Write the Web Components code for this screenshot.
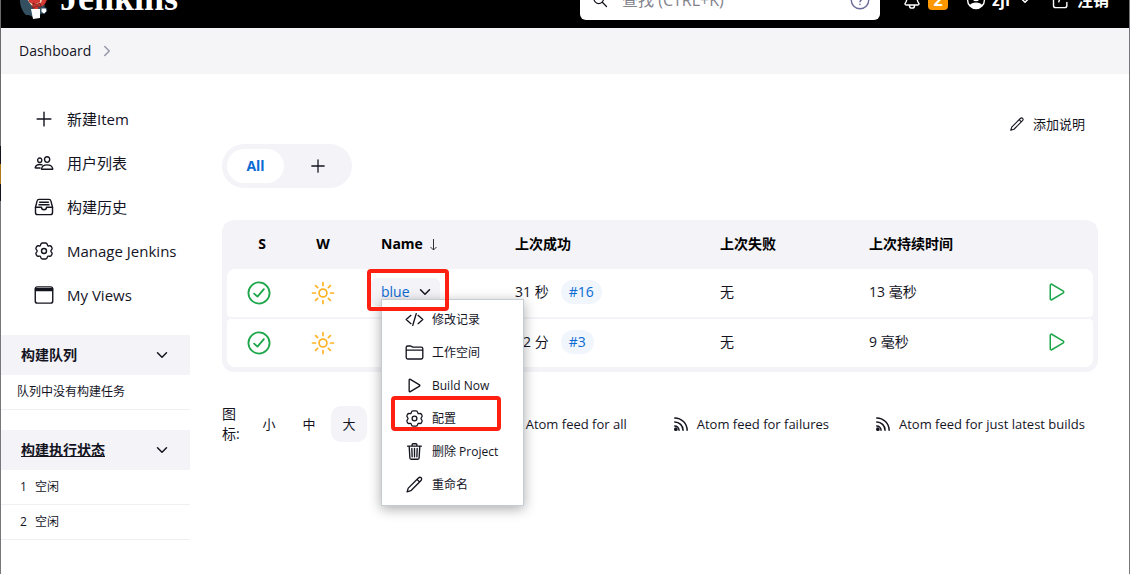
<!DOCTYPE html>
<html lang="zh-CN">
<head>
<meta charset="utf-8">
<title>Dashboard [Jenkins]</title>
<style>
html,body{margin:0;min-height:100%}
body{font-family:"Open Sans","Noto Sans CJK SC",sans-serif;font-size:14px;line-height:20px;color:#14141f;background:#fff;overflow:hidden;
--pale:#f3f3f8;--link:#0b6bd3;--green:#1ea64b}
</style>
</head>
<body>
<jk-app></jk-app>
<script>
const ICONS={
add:'<path d="M256 80v352M432 256H80"/>',
people:'<path d="M402 168c-2.93 40.67-33.1 72-66 72s-63.12-31.32-66-72c-3-42.31 26.37-72 66-72s69 30.46 66 72z"/><path d="M336 304c-65.17 0-127.84 32.37-143.54 95.41-2.08 8.34 3.15 16.59 11.72 16.59h263.65c8.57 0 13.77-8.25 11.72-16.59C463.85 335.36 401.18 304 336 304z"/><path d="M200 185.94c-2.34 32.48-26.72 58.06-53 58.06s-50.7-25.57-53-58.06C91.61 152.15 115.34 128 147 128s55.39 24.77 53 57.94z"/><path d="M206 306c-18.05-8.27-37.93-11.45-59-11.45-52 0-102.1 25.85-114.65 76.2-1.65 6.66 2.53 13.25 9.37 13.25H154"/>',
tray:'<path d="M384 60H128c-26 0-43 14-48 40L38 262v132a56 56 0 0056 56h324a56 56 0 0056-56V262l-42-162c-5-27-23-40-48-40z"/><path d="M38 262h154M320 262h154M192 262a64 64 0 00128 0M144 134h224M128 198h256"/>',
settings:'<circle cx="256" cy="256" r="64"/><path d="M438 256l14 26c22 20 30 38 16 62l-14 24c-14 24-34 28-62 18h-30l-16 27c-6 30-20 49-47 49h-86c-27 0-41-19-47-49l-16-27h-30c-28 10-48 6-62-18l-14-24c-14-24-6-42 16-62l14-26-14-26c-22-20-30-38-16-62l14-24c14-24 34-28 62-18h30l16-27c6-30 20-49 47-49h86c27 0 41 19 47 49l16 27h30c28-10 48-6 62 18l14 24c14 24 6 42-16 62z" transform="translate(13 0) scale(.95 1)"/>',
window:'<rect x="32" y="48" width="448" height="416" rx="56"/><path d="M40 92h432v48H40z" fill="currentColor"/>',
down:'<path d="M112 184l144 144 144-144"/>',
right:'<path d="M184 112l144 144-144 144"/>',
play:'<path d="M112 111v290c0 17.44 17 28.52 31 20.16l247.9-148.37c12.12-7.25 12.12-26.33 0-33.58L143 90.84c-14-8.36-31 2.72-31 20.16z"/>',
code:'<path d="M160 368L32 256l128-112M352 368l128-112-128-112M304 96l-96 320"/>',
folder:'<path d="M440 432H72a40 40 0 01-40-40V120a40 40 0 0140-40h75.89a40 40 0 0122.19 6.72l27.84 18.56a40 40 0 0022.19 6.72H440a40 40 0 0140 40v240a40 40 0 01-40 40zM32 192h448"/>',
trash:'<path d="M112 112l20 320c.95 18.49 14.4 32 32 32h184c17.67 0 30.87-13.51 32-32l20-320M70 112h372M192 112V72a23.93 23.93 0 0124-24h80a23.93 23.93 0 0124 24v40M256 176v224M184 176l8 224M328 176l-8 224"/>',
pencil:'<path d="M56 456l32-102L362 80c56-48 118 14 70 70L158 424zM324 118l70 70"/>',
check:'<circle cx="256" cy="256" r="208"/><path d="M352 180L226 328l-66-60"/>',
sun:'<path d="M256 32v64M256 416v64M414 98l-44 44M142 370l-44 44M480 256h-64M96 256H32M414 414l-44-44M142 142L98 98"/><circle cx="256" cy="256" r="84"/>',
rss:'<path d="M56 60c216 0 396 180 396 396M56 190c146 0 266 120 266 266"/><path d="M56 318c76 0 138 62 138 138"/><circle cx="92" cy="420" r="36" fill="currentColor"/>',
search:'<circle cx="216" cy="216" r="152"/><path d="M330 330l134 134"/>',
help:'<circle cx="256" cy="256" r="224"/><path d="M190 200c0-90 136-84 132 4-2 48-66 48-66 98M256 362v10"/>',
bell:'<path d="M428 336c-22-27-38-41-38-118 0-70-34-95-64-108-22-9-20-62-70-62s-48 53-70 62c-30 13-64 38-64 108 0 77-16 91-38 118-14 18-6 48 22 48h300c28 0 36-30 22-48zM320 384v16a64 64 0 01-128 0v-16"/>',
user:'<circle cx="256" cy="256" r="216"/><path d="M110 400c54-84 238-84 292 0-60 70-232 70-292 0z" fill="currentColor"/><circle cx="256" cy="200" r="72" fill="currentColor"/>',
logout:'<path d="M300 120H120a56 56 0 00-56 56v220a56 56 0 0056 56h230a56 56 0 0056-56v-76M200 300c30-120 110-140 250-140M370 80l90 80-90 80"/>'
};
const define=(name,html,setup)=>{
  const t=document.createElement('template');t.innerHTML=html;
  customElements.define(name,class extends HTMLElement{
    connectedCallback(){
      if(this.shadowRoot)return;
      const r=this.attachShadow({mode:'open'});
      const c=t.content.cloneNode(true);
      if(setup)setup(this,c);
      r.append(c);
    }
  });
};

/* line icon: name, size in px, weight = stroke width in viewBox units */
define('jk-icon','<style>:host{display:block;flex:none;width:fit-content}svg{display:block;fill:none;stroke:currentColor;stroke-linecap:round;stroke-linejoin:round}</style><svg viewBox="0 0 512 512" aria-hidden="true"></svg>',(h,r)=>{
  const s=r.querySelector('svg'),n=h.getAttribute('size')||20;
  s.setAttribute('width',n);s.setAttribute('height',n);
  s.style.strokeWidth=h.getAttribute('weight')||36;
  s.innerHTML=ICONS[h.getAttribute('name')];
});

define('jk-logo',`<style>
:host{display:block}
a{display:flex;align-items:center;gap:12px;color:#fff;text-decoration:none;font:bold 36px/40px "Liberation Serif",serif}
svg{display:block}
span{padding-bottom:4px}
</style>
<a href="#"><svg width="28" height="40" viewBox="0 0 28 40" aria-hidden="true">
<circle cx="14" cy="17" r="13" fill="#d33833"/>
<path d="M7 12c0-12 15-12 15 0v8c-2 8-12 8-15 0z" fill="#f0d6b7"/>
<path d="M8 17l12 0v5l-6 3-5-3z" fill="#d33833"/>
<path d="M0 20l7-1 4 6 3 4-1 8-4-2H6C3 32 0 27 0 20z" fill="#335061"/>
<path d="M18 27l7-2-2 8-4 2z" fill="#335061"/>
<path d="M13 23l3 2 4-2 1 4-4-1-4 2z" fill="#d33833" stroke="#81201d"/>
<path d="M11 29l9 0 0 9-7 1z" fill="#fff"/>
<path d="M21 28l5 0 1 3-3 3-3-2z" fill="#fff" stroke="#335061"/>
</svg><span>Jenkins</span></a>`);

define('jk-header',`<style>
:host{display:block;background:#000;color:#fff;overflow:hidden}
nav{display:flex;align-items:center;height:56px;margin-top:-28px;padding:0 20px 0 19px;font-size:16px;font-weight:700}
.search{display:flex;align-items:center;box-sizing:border-box;width:300px;height:40px;margin-left:auto;margin-right:22px;padding:0 10px 0 12px;gap:14px;border-radius:6px;background:#fff;color:#14141f}
input{flex:1;min-width:0;border:0;padding:0;background:none;font:400 16px/24px "Open Sans","Noto Sans CJK SC",sans-serif;outline:0}
input::placeholder{color:#83838c;opacity:1}
a,button{display:flex;align-items:center;gap:6px;color:inherit;text-decoration:none;font:inherit;background:none;border:0;padding:0}
.badge{background:#ff9800;border-radius:4px;width:20px;height:20px;line-height:20px;text-align:center}
.user{margin:0 18px}
</style>
<nav><jk-logo></jk-logo>
<label class="search"><jk-icon name="search" size="16" weight="40"></jk-icon><input type="search" placeholder="查找 (CTRL+K)" aria-label="查找"><jk-icon name="help" size="20" style="color:#6b6b99"></jk-icon></label>
<button aria-label="通知"><jk-icon name="bell" size="20"></jk-icon><span class="badge">2</span></button>
<button class="user"><jk-icon name="user" size="20"></jk-icon><span>zjf</span><jk-icon name="down" size="16" weight="50"></jk-icon></button>
<a href="#"><jk-icon name="logout" size="20"></jk-icon><span>注销</span></a>
</nav>`);

define('jk-crumbs',`<style>
:host{display:block;background:#f5f5f8}
nav{display:flex;align-items:center;gap:8px;height:46px;padding:0 18px}
a{color:inherit;text-decoration:none}
jk-icon{color:#9a9aab}
</style><nav><a href="#">Dashboard</a><jk-icon name="right" size="16" weight="52"></jk-icon></nav>`);

define('jk-task',`<style>
:host{display:block}
a{display:flex;align-items:center;gap:13px;height:44px;padding-left:33px;color:inherit;text-decoration:none;font-size:15px}
</style><a href="#"><jk-icon size="20"></jk-icon><slot></slot></a>`,(h,r)=>r.querySelector('jk-icon').setAttribute('name',h.getAttribute('icon')));

define('jk-widget',`<style>
:host{display:block;margin-bottom:20px;font-size:12px}
header{display:flex;align-items:center;justify-content:space-between;height:40px;padding:0 20px;background:var(--pale);font-size:14px;font-weight:700}
button{border:0;background:none;padding:0;color:inherit}
::slotted(div){height:34px;line-height:34px;border-bottom:1px solid #f0f0f4}
</style><header><slot name="title"></slot><button aria-label="折叠"><jk-icon name="down" size="16" weight="48"></jk-icon></button></header><slot></slot>`);

define('jk-sidebar',`<style>
:host{display:block;padding-top:23px}
nav{margin-bottom:18px}
.note{padding-left:16px}
.exec{padding-left:19px;display:flex;gap:8px}
a{color:inherit}
</style>
<nav><jk-task icon="add">新建Item</jk-task><jk-task icon="people">用户列表</jk-task><jk-task icon="tray">构建历史</jk-task><jk-task icon="settings">Manage Jenkins</jk-task><jk-task icon="window">My Views</jk-task></nav>
<jk-widget><span slot="title">构建队列</span><div class="note">队列中没有构建任务</div></jk-widget>
<jk-widget><a slot="title" href="#">构建执行状态</a><div class="exec"><span>1</span><span>空闲</span></div><div class="exec"><span>2</span><span>空闲</span></div></jk-widget>`);

define('jk-tabs',`<style>
:host{display:flex;width:fit-content;padding:5px;gap:4px;border-radius:22px;background:var(--pale)}
a{display:flex;align-items:center;justify-content:center;width:57px;height:34px;border-radius:17px;color:inherit;text-decoration:none;font-weight:700}
.on{background:#fff;color:var(--link)}
a+a{width:59px}
</style><a class="on" href="#">All</a><a href="#" aria-label="新建视图"><jk-icon name="add" size="18"></jk-icon></a>`);

define('jk-mark','<style>:host{position:absolute;box-sizing:border-box;border:4px solid #ff2012;border-radius:4px;pointer-events:none}</style>');

define('jk-menu',`<style>
:host{display:block;box-sizing:border-box;width:143px;padding:3px 0 4px;background:#fff;border:1px solid #c4ced2;box-shadow:0 3px 12px #0005;font-size:12px;font-weight:400}
a{position:relative;display:flex;align-items:center;gap:8px;height:33px;padding-left:23px;color:#14141f;text-decoration:none}
jk-mark{left:9px;top:-6px;width:110px;height:35px}
</style>
<a href="#"><jk-icon name="code" size="19"></jk-icon>修改记录</a>
<a href="#"><jk-icon name="folder" size="19"></jk-icon>工作空间</a>
<a href="#"><jk-icon name="play" size="19"></jk-icon>Build Now</a>
<a href="#"><jk-icon name="settings" size="19"></jk-icon>配置<jk-mark></jk-mark></a>
<a href="#"><jk-icon name="trash" size="19"></jk-icon>删除 Project</a>
<a href="#"><jk-icon name="pencil" size="19"></jk-icon>重命名</a>`);

define('jk-projects',`<style>
:host{display:block;padding:3px 5px;border-radius:12px;background:var(--pale)}
table{width:100%;table-layout:fixed;border-collapse:separate;border-spacing:0 2px}
th,td{padding:0 0 0 26px;text-align:left;white-space:nowrap}
th{height:38px;padding-bottom:4px;color:#000}
th span{display:flex;align-items:center;gap:6px}
td{height:46px;padding-bottom:2px;background:#fff}
.i{padding-left:0}
th.i{text-align:center}
th.i:first-child{padding-left:6px}
td.i{height:48px;padding-bottom:0}
td.i jk-icon{margin:0 auto}
td:first-child{border-radius:4px 0 0 4px}td:last-child{border-radius:0 4px 4px 0}
tbody tr:first-child td:first-child{border-top-left-radius:8px}tbody tr:first-child td:last-child{border-top-right-radius:8px}
tbody tr:last-child td:first-child{border-bottom-left-radius:8px}tbody tr:last-child td:last-child{border-bottom-right-radius:8px}
.s{color:var(--green)}.w{color:#fdb325}
.name{position:relative;width:69px;margin-left:-10px}
.chip{display:flex;align-items:center;justify-content:space-between;box-sizing:border-box;width:69px;height:28px;padding:0 7px 0 10px;border:0;border-radius:6px;background:var(--pale);font:inherit;color:#14141f}
.chip b{font-weight:400;color:var(--link)}
jk-menu{position:absolute;left:10px;top:21px;z-index:2}
jk-mark{left:-4px;top:-9px;width:82px;height:42px;z-index:3}
.when{display:flex;align-items:center;gap:12px}
.when a{padding:2px 8px;border-radius:12px;background:#f0f6fc;color:var(--link);text-decoration:none}
.run{display:block;margin-left:auto;margin-right:24px;border:0;padding:0;background:none;color:var(--green)}
</style>
<table>
<colgroup><col style="width:64px"><col style="width:64px"><col style="width:134px"><col style="width:205px"><col style="width:149px"><col><col style="width:80px"></colgroup>
<thead><tr><th class="i">S</th><th class="i">W</th><th><span>Name <svg width="9" height="13" viewBox="0 0 9 13" fill="none" stroke="#333" aria-hidden="true"><path d="M4.500 1v11M1.500 9l3 3 3-3"/></svg></span></th><th>上次成功</th><th>上次失败</th><th>上次持续时间</th><th></th></tr></thead>
<tbody>
<tr><td class="i s"><jk-icon name="check" size="26"></jk-icon></td><td class="i w"><jk-icon name="sun" size="24"></jk-icon></td>
<td><div class="name"><button class="chip" aria-expanded="true"><b>blue</b><jk-icon name="down" size="16" weight="48"></jk-icon></button><jk-menu></jk-menu><jk-mark></jk-mark></div></td>
<td><div class="when">31 秒<a href="#">#16</a></div></td><td>无</td><td>13 毫秒</td><td><button class="run" aria-label="构建"><jk-icon name="play" size="24" weight="32"></jk-icon></button></td></tr>
<tr><td class="i s"><jk-icon name="check" size="26"></jk-icon></td><td class="i w"><jk-icon name="sun" size="24"></jk-icon></td>
<td></td>
<td><div class="when">12 分<a href="#">#3</a></div></td><td>无</td><td>9 毫秒</td><td><button class="run" aria-label="构建"><jk-icon name="play" size="24" weight="32"></jk-icon></button></td></tr>
</tbody></table>`);

define('jk-feed',`<style>
:host{display:block}
a{display:flex;align-items:center;gap:8px;color:inherit;text-decoration:none;white-space:nowrap}
</style><a href="#"><jk-icon name="rss" size="16" weight="48"></jk-icon><slot></slot></a>`);

define('jk-footer',`<style>
:host{display:flex;align-items:center;justify-content:space-between;font-size:13px}
.sizes{display:flex;align-items:center;gap:4px}
.label{width:25px;font-size:14px}
button{width:36px;height:36px;border:0;border-radius:10px;padding:0;background:none;font:inherit;color:inherit}
.on{background:var(--pale)}
.feeds{display:flex;gap:46px;padding-right:13px}
</style>
<div class="sizes"><span class="label">图标:</span><button>小</button><button>中</button><button class="on">大</button></div>
<div class="feeds"><jk-feed>Atom feed for all</jk-feed><jk-feed>Atom feed for failures</jk-feed><jk-feed>Atom feed for just latest builds</jk-feed></div>`);

define('jk-main',`<style>
:host{display:block;padding:38px 31px 0 32px}
.edit{display:flex;align-items:center;gap:8px;width:fit-content;height:24px;margin:0 13px 0 auto;color:inherit;text-decoration:none;font-size:13px}
jk-tabs{margin-top:8px;margin-bottom:32px}
jk-footer{margin-top:32px}
</style>
<a class="edit" href="#"><jk-icon name="pencil" size="16"></jk-icon>添加说明</a>
<jk-tabs></jk-tabs><jk-projects></jk-projects><jk-footer></jk-footer>`);

define('jk-app',`<style>
:host{display:grid;grid-template-columns:1px 1fr 1px;min-height:100vh}
.l{background:linear-gradient(#6b6b6b 146px,#15121a 146px 164px,#b07a18 164px 184px,#15121a 184px 201px,#77777b 201px)}
.r{background:#77777b}
.body{display:grid;grid-template-columns:189px 1fr}
</style>
<div class="l"></div>
<div><jk-header></jk-header><jk-crumbs></jk-crumbs><div class="body"><jk-sidebar></jk-sidebar><jk-main></jk-main></div></div>
<div class="r"></div>`);
</script>
</body>
</html>
